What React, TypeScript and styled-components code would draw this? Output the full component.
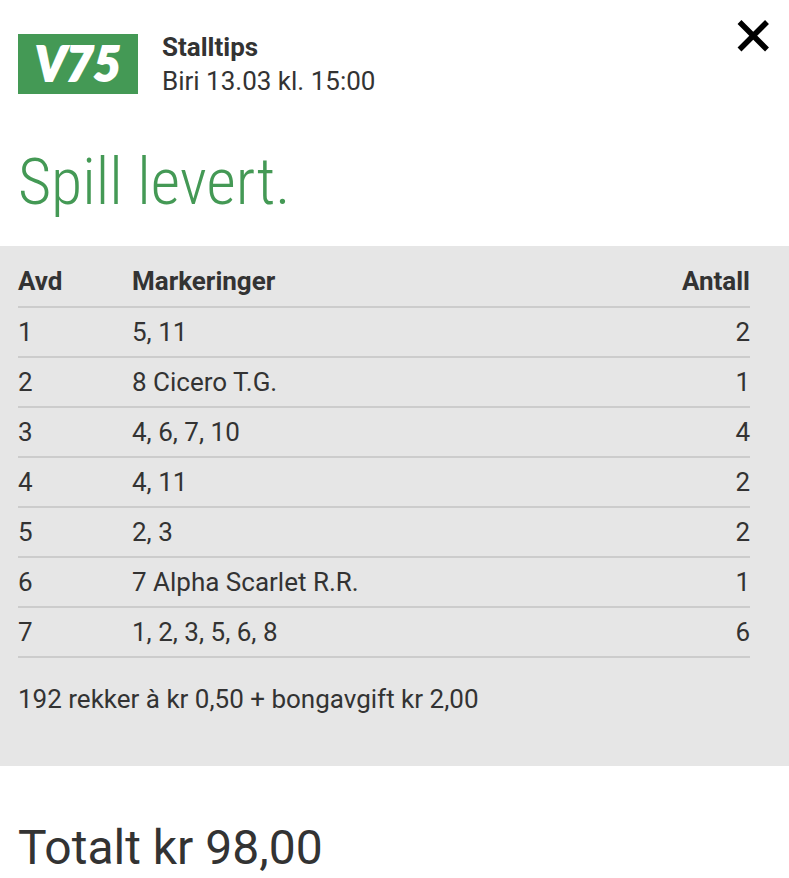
import React from 'react';
import styled, { createGlobalStyle } from 'styled-components';

const Global = createGlobalStyle`
  *, *::before, *::after { box-sizing: border-box; }
  body { margin: 0; background: #fff; color: #333; font: 400 26px/34px Roboto, sans-serif; }
`;

const Header = styled.header`
  display: flex;
  align-items: flex-start;
  padding: 30px 18px 0;
`;
const Logo = styled.svg`
  display: block;
  flex: none;
  width: 120px;
  height: 60px;
  margin: 4px 24px 0 0;
  background: #449955;
`;
const Info = styled.div`
  flex: 1;
`;
const GameName = styled.div`
  font-weight: 700;
`;
const Close = styled.button`
  flex: none;
  margin: -12px 0 0;
  padding: 0;
  border: 0;
  background: none;
  color: #000;
  cursor: pointer;
  svg { display: block; }
`;
const Title = styled.h1`
  margin: 43px 0 0;
  padding: 0 18px;
  color: #449955;
  font: 300 64px/84px "Roboto Condensed", Roboto, sans-serif;
`;
const Slip = styled.section`
  margin-top: 21px;
  padding: 11px 39px 50px 18px;
  background: #e6e6e6;
`;
const Table = styled.table`
  width: 100%;
  border-collapse: collapse;
`;
const Cell = styled.td<{ $end?: boolean }>`
  height: 50px;
  padding: 0;
  border-bottom: 2px solid #ccc;
  text-align: ${p => (p.$end ? 'right' : 'left')};
  font-weight: inherit;
`;
const HeadCell = styled(Cell)<{ $wide?: boolean }>`
  width: ${p => (p.$wide ? 'auto' : '114px')};
  padding-bottom: 2px;
  font-weight: 700;
`;
const Price = styled.p`
  margin: 24px 0 0;
`;
const Total = styled.p`
  margin: 50px 0 0;
  padding: 0 18px;
  font-size: 48px;
  line-height: 64px;
`;

const legs = [
  { leg: 1, marks: '5, 11', count: 2 },
  { leg: 2, marks: '8 Cicero T.G.', count: 1 },
  { leg: 3, marks: '4, 6, 7, 10', count: 4 },
  { leg: 4, marks: '4, 11', count: 2 },
  { leg: 5, marks: '2, 3', count: 2 },
  { leg: 6, marks: '7 Alpha Scarlet R.R.', count: 1 },
  { leg: 7, marks: '1, 2, 3, 5, 6, 8', count: 6 },
];

export default function App() {
  return (
    <main>
      <Global />
      <Header>
        <Logo viewBox="0 0 120 60" role="img" aria-label="V75">
          <text x="60" y="47" textAnchor="middle" fill="#fff" stroke="#fff" strokeWidth="2" fontFamily="Lato, sans-serif" fontWeight="900" fontStyle="italic" fontSize="47">V75</text>
        </Logo>
        <Info>
          <GameName>Stalltips</GameName>
          <div>Biri 13.03 kl. 15:00</div>
        </Info>
        <Close type="button" aria-label="Lukk">
          <svg width="36" height="36" viewBox="0 0 36 36" stroke="currentColor" strokeWidth="5.5">
            <path d="M4.5 4L32 31.5M32 4L4.5 31.5" />
          </svg>
        </Close>
      </Header>
      <Title>Spill levert.</Title>
      <Slip>
        <Table>
          <thead>
            <tr>
              <HeadCell as="th" scope="col">Avd</HeadCell>
              <HeadCell as="th" scope="col" $wide>Markeringer</HeadCell>
              <HeadCell as="th" scope="col" $end>Antall</HeadCell>
            </tr>
          </thead>
          <tbody>
            {legs.map(row => (
              <tr key={row.leg}>
                <Cell>{row.leg}</Cell>
                <Cell>{row.marks}</Cell>
                <Cell $end>{row.count}</Cell>
              </tr>
            ))}
          </tbody>
        </Table>
        <Price>192 rekker à kr 0,50 + bongavgift kr 2,00</Price>
      </Slip>
      <Total>Totalt kr 98,00</Total>
    </main>
  );
}
